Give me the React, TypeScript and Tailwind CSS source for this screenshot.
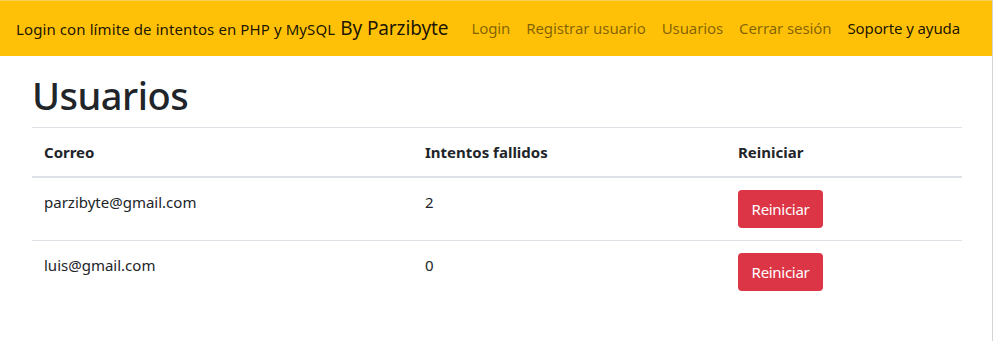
import React from "react";

const font = { fontFamily: '"Noto Sans", "Open Sans", sans-serif' };

export default function App() {
  const rows = [
    { correo: "parzibyte@gmail.com", intentos: "2" },
    { correo: "luis@gmail.com", intentos: "0" },
  ];
  return (
    <div className="w-[994px] h-[341px] bg-white text-[#212529]" style={font}>
      <div className="w-[993px] h-full border-r border-[#d4d4d4]">
        <nav className="h-[56px] bg-[#ffc107] border-t border-[#f8cf57] flex items-center pl-[16px] pr-[32px]">
          <div className="flex items-baseline whitespace-nowrap text-[rgba(0,0,0,0.9)]">
            <span className="text-[15px] tracking-[0.1px]">Login con límite de intentos en PHP y MySQL</span>
            <span className="text-[19px] ml-[5px] tracking-[-0.1px]">By Parzibyte</span>
          </div>
          <div className="ml-auto flex items-center whitespace-nowrap text-[15px] tracking-[-0.1px]">
            <a className="px-[8px] py-[8px] text-[rgba(0,0,0,0.5)]">Login</a>
            <a className="px-[8px] py-[8px] text-[rgba(0,0,0,0.5)]">Registrar usuario</a>
            <a className="px-[8px] py-[8px] text-[rgba(0,0,0,0.5)]">Usuarios</a>
            <a className="px-[8px] py-[8px] text-[rgba(0,0,0,0.5)]">Cerrar sesión</a>
            <a className="pl-[8px] py-[8px] text-[rgba(0,0,0,0.9)]">Soporte y ayuda</a>
          </div>
        </nav>
        <div className="px-[32px] pt-[15px]">
          <h1 className="text-[38px] leading-[48px] font-medium mb-[8px] tracking-[-0.5px]">Usuarios</h1>
          <table className="w-[930px] border-collapse text-[15px]">
            <thead>
              <tr className="border-t border-[#dee2e6]">
                <th className="w-[381px] text-left font-bold px-[12px] py-[12px] leading-[24px] border-b-2 border-[#dee2e6]">Correo</th>
                <th className="w-[313px] text-left font-bold px-[12px] py-[12px] leading-[24px] border-b-2 border-[#dee2e6]">Intentos fallidos</th>
                <th className="text-left font-bold px-[12px] py-[12px] leading-[24px] border-b-2 border-[#dee2e6]">Reiniciar</th>
              </tr>
            </thead>
            <tbody>
              {rows.map((r, i) => (
                <tr key={r.correo} className={i > 0 ? "border-t border-[#dee2e6]" : ""}>
                  <td className="align-top px-[12px] py-[12px] leading-[24px]">{r.correo}</td>
                  <td className="align-top px-[12px] py-[12px] leading-[24px]">{r.intentos}</td>
                  <td className="align-top px-[12px] py-[12px] leading-[24px]">
                    <button className="bg-[#dc3545] text-white rounded-[4px] px-[12px] h-[38px] w-[85px] text-[15px] leading-[24px] tracking-[-0.3px]">
                      Reiniciar
                    </button>
                  </td>
                </tr>
              ))}
            </tbody>
          </table>
        </div>
      </div>
    </div>
  );
}
